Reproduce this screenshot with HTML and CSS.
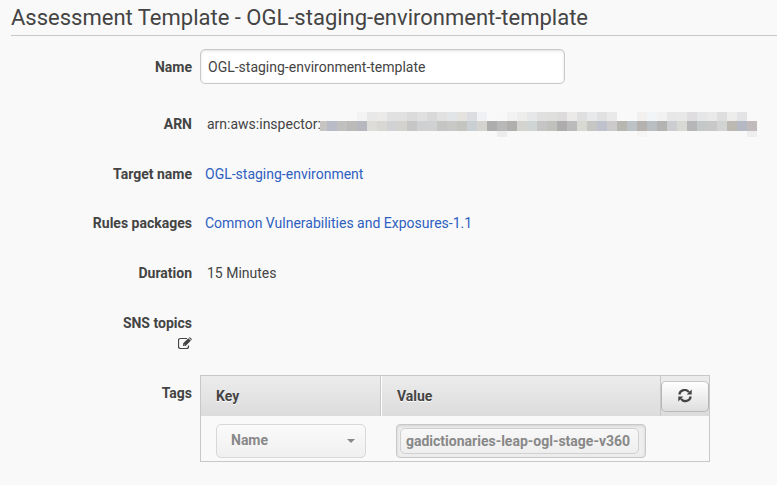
FILE: index.html
```html
<!DOCTYPE html>
<html lang="en">
<head>
    <meta charset="UTF-8">
    <meta name="viewport" content="width=device-width, initial-scale=1.0">
    <title>Assessment Template</title>
    <link rel="stylesheet" href="styles.css">
</head>
<body>
    <h1>Assessment Template - OGL-staging-environment-template</h1>

    <form class="details">
        <div class="row name-row">
            <label class="label" for="name">Name</label>
            <input type="text" id="name" class="name-input" value="OGL-staging-environment-template">
        </div>

        <div class="row">
            <div class="label">ARN</div>
            <div class="value arn">
                <span>arn:aws:inspector:</span>
                <svg class="redacted" id="redacted" width="437" height="25" viewBox="0 0 437 25" shape-rendering="crispEdges" aria-hidden="true"></svg>
            </div>
        </div>

        <div class="row target-row">
            <div class="label">Target name</div>
            <div class="value link"><a href="#">OGL-staging-environment</a></div>
        </div>

        <div class="row">
            <div class="label">Rules packages</div>
            <div class="value link"><a href="#">Common Vulnerabilities and Exposures-1.1</a></div>
        </div>

        <div class="row">
            <div class="label">Duration</div>
            <div class="value">15 Minutes</div>
        </div>

        <div class="row sns-row">
            <div class="label">
                SNS topics
                <button type="button" class="edit" aria-label="Edit SNS topics">
                    <svg width="14" height="14" viewBox="0 0 14 14">
                        <path d="M9 2.500H2.500Q.5 2.500 .5 4.500V10.500Q.5 12.500 2.500 12.500H8.500Q10.500 12.500 10.500 10.500V9.500" fill="none" stroke="#444" stroke-width="1.200"/>
                        <path d="M5 7.600L10.300 2.300L12.800 4.800L7.500 10.100H5Z" fill="#444"/>
                        <path d="M10.900 1.700Q11.600 1 12.400 1.700L13.500 2.800Q14.100 3.500 13.400 4.200Z" fill="#444"/>
                        <path d="M5.700 8.300L6.800 9.400" stroke="#f9f9f9" stroke-width=".8"/>
                    </svg>
                </button>
            </div>
        </div>

        <div class="row tags-row">
            <div class="label">Tags</div>
            <table class="tags">
                <thead>
                    <tr>
                        <th class="key">Key</th>
                        <th class="val">Value</th>
                        <th class="action">
                            <button type="button" class="refresh" aria-label="Refresh">
                                <svg width="14" height="14" viewBox="0 0 14 14">
                                    <path d="M1.300 5.500A5.400 5.400 0 0 1 11 3.200M12.700 7.500A5.400 5.400 0 0 1 3 9.800" fill="none" stroke="#444" stroke-width="2.200"/>
                                    <path d="M13.700 .5V5.500H8.700ZM.3 12.500V7.500H5.300Z" fill="#444"/>
                                </svg>
                            </button>
                        </th>
                    </tr>
                </thead>
                <tbody>
                    <tr>
                        <td>
                            <div class="select-wrap">
                                <select aria-label="Tag key" disabled>
                                    <option>Name</option>
                                </select>
                            </div>
                        </td>
                        <td colspan="2">
                            <div class="tag-box"><span class="tag">gadictionaries-leap-ogl-stage-v360</span></div>
                        </td>
                    </tr>
                </tbody>
            </table>
        </div>
    </form>

    <script>
        // colours of the masked account id, one entry per 10px block ('' = empty)
        const upper = ',,,,f3f3f3,e8e8e8,ebeae8,e1e1e1,e1e1e1,dbdbdb,e0e0e0,d9d9d9,e1e1e1,e2e5e8,e5e3e0,dbdde0,eff1f4,,f8f8f8,f2f2f2,ededec,e6e7e9,e0e0e0,dfdfdd,dddbdc,ebeae8,dfdfdf,e8e9eb,e1e1e2,e9e9e9,,,f3f1ef,f1f5f7,f2f2f2,e7e7e8,e8e8e8,dfdddf,e4e6e8,e9e9e9,dedede,ededeb,e3e3e5,'.split(',');
        const middle = 'c6c5c1,b9bcc6,c0c0bf,bbbab8,b7b7bf,dddcd9,d8d7d4,d0d2d3,d3d2cf,c6c6c7,cfd0d1,cfd1d2,c5c5c4,c8c8c7,c4c4c0,cacfd3,d4d3d0,adadae,b8b8b8,b0afad,d4d3d0,cfd4d5,c5c5c5,c0c0bd,aeacad,bbbbbb,d8d9d3,c6c6c4,bfc2cc,cdcacc,b8b6b1,bcc2c6,b5b1ae,b8bec1,b3b3b2,cccdd0,d8d9d5,b6b6b8,c5c8c8,c8c8c8,d2d3d3,bcb8b2,b5b9c3,c0bbba'.split(',');
        const lower = [];
        lower[18] = 'ededed';
        lower[32] = 'f5f5f5';
        lower[43] = 'eeeeee';

        function drawRow(colors, y, height) {
            let out = '';
            colors.forEach((color, i) => {
                if (color) {
                    out += `<rect x="${i * 10 - 3}" y="${y}" width="10" height="${height}" fill="#${color}"/>`;
                }
            });
            return out;
        }

        document.getElementById('redacted').innerHTML =
            drawRow(upper, 0, 9) + drawRow(middle, 9, 10) + drawRow(lower, 19, 6);
    </script>
</body>
</html>
```
FILE: styles.css
```css
* {
    box-sizing: border-box;
}
body {
    margin: 0;
    padding: 0 0 20px 11px;
    background-color: #f9f9f9;
    color: #444;
    font-family: Roboto, Arial, sans-serif;
    font-size: 14px;
    line-height: 20px;
}
h1 {
    margin: 0 0 13px;
    padding: 3px 0;
    border-bottom: 1px solid #c8c8c8;
    font-size: 22px;
    font-weight: normal;
    line-height: 29px;
}
.row {
    display: grid;
    grid-template-columns: 181px minmax(0, 1fr);
    column-gap: 8px;
    margin-bottom: 30px;
}
.name-row {
    align-items: center;
}
.target-row {
    margin-bottom: 29px;
}
.label {
    text-align: right;
    font-weight: bold;
}
.value {
    padding-left: 7px;
}
.value.link {
    padding-left: 5px;
}
a {
    color: #2e5fc1;
    text-decoration: none;
}
a:hover {
    text-decoration: underline;
}
.name-input {
    width: 100%;
    max-width: 365px;
    height: 35px;
    padding: 0 7px;
    border: 1px solid #c8c8c8;
    border-radius: 5px;
    background-color: #fff;
    box-shadow: inset 0 1px 3px rgba(0, 0, 0, 0.12);
    color: #444;
    font: inherit;
}
.arn {
    display: flex;
    height: 20px;
}
.redacted {
    flex: none;
    margin: -2px 0 0 -1px;
}
.edit {
    display: block;
    width: 14px;
    height: 20px;
    margin-left: auto;
    padding: 0;
    border: none;
    background: none;
    cursor: pointer;
}
.edit svg,
.refresh svg {
    display: block;
    margin: 0 auto;
}
.sns-row {
    margin-bottom: 22px;
}
.tags-row {
    margin-bottom: 0;
}
.tags-row .label {
    padding-top: 8px;
}
.tags {
    width: 100%;
    max-width: 510px;
    border: 1px solid #c8c8c8;
    border-collapse: separate;
    border-spacing: 0;
    table-layout: fixed;
}
.tags th {
    height: 40px;
    padding: 0 15px;
    background: linear-gradient(#ececec, #dcdcdc);
    text-align: left;
    text-shadow: 0 1px 0 #fff;
}
.tags .key {
    width: 180px;
    border-right: 1px solid #c8c8c8;
}
.tags .val {
    border-left: 1px solid #fff;
}
.tags .action {
    width: 49px;
    padding: 0;
    border-left: 1px solid #c8c8c8;
}
.refresh {
    display: block;
    width: 100%;
    height: 31px;
    padding: 0;
    border: 1px solid #b8b8b8;
    border-top-color: #c8c8c8;
    border-radius: 5px;
    background: linear-gradient(#fff, #dedede);
    cursor: pointer;
}
.tags td {
    height: 45px;
    padding: 8px 15px 3px;
}
.select-wrap {
    position: relative;
}
.select-wrap::after {
    content: "";
    position: absolute;
    top: 15px;
    right: 11px;
    border: 4px solid transparent;
    border-top-color: #888;
    border-bottom: none;
}
select {
    display: block;
    width: 100%;
    height: 34px;
    padding: 0 14px 2px;
    border: 1px solid #d8d8d8;
    border-radius: 5px;
    appearance: none;
    background: linear-gradient(#fafafa, #f0f0f0);
    color: #888;
    font: inherit;
    font-weight: bold;
    opacity: 1;
}
.tag-box {
    width: 250px;
    height: 34px;
    padding: 3px;
    border: 1px solid #c8c8c8;
    border-radius: 4px;
    background-color: #eee;
    box-shadow: inset 0 1px 3px rgba(0, 0, 0, 0.12);
}
.tag {
    display: inline-block;
    min-width: 239px;
    padding: 2px 5px;
    border: 1px solid #d0d0d0;
    border-radius: 5px;
    background: linear-gradient(#f8f8f8, #eee);
    color: #888;
    font-weight: bold;
}
```
